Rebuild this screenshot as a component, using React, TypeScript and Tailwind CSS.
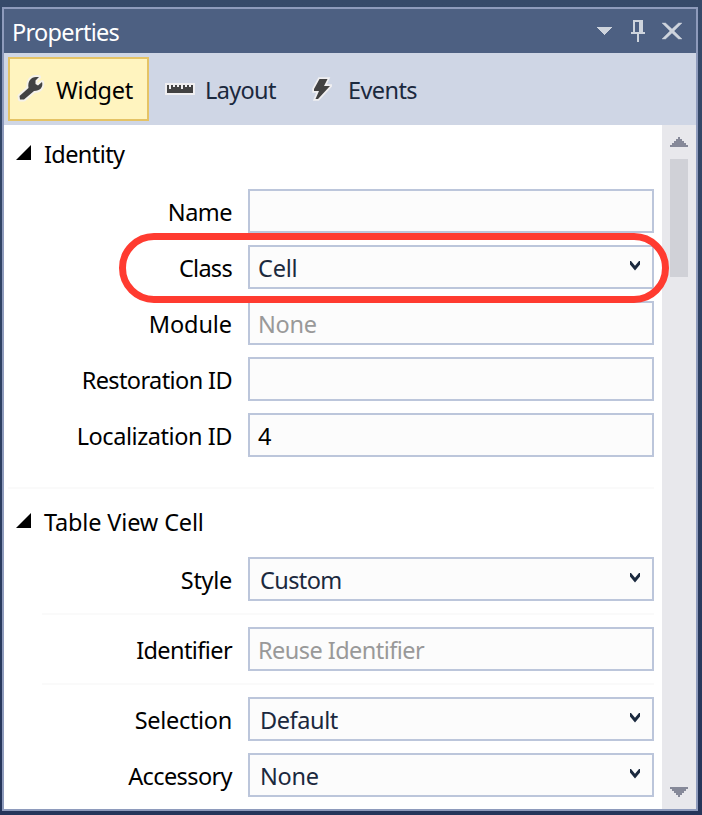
import type { ReactNode } from "react";

function Header({ title, className }: { title: string; className: string }) {
  return (
    <div className={`flex items-center ${className}`}>
      <svg width="15" height="15" viewBox="0 0 15 15" className="mr-[13px] ml-3 -mt-[3px]">
        <path d="M15 0V15H0Z" fill="#000" />
      </svg>
      <span className="text-black">{title}</span>
    </div>
  );
}

function Row({ label, tracking = "tracking-[-0.52px]", children }: { label: string; tracking?: string; children?: ReactNode }) {
  return (
    <div className="flex h-11 items-center">
      <span className={`w-[228px] pt-[2px] text-right whitespace-nowrap text-black ${tracking}`}>{label}</span>
      <div className="ml-4 flex h-11 w-[406px] items-center border-2 border-[#bcc6db] bg-[#fcfcfc] pt-[2px] tracking-[-0.5px] text-[#1b293e]">
        {children}
      </div>
    </div>
  );
}

function Chevron() {
  return (
    <svg width="12" height="10" viewBox="0 0 12 10" className="mr-[11px] mb-1 ml-auto">
      <path d="M1 0V3.6L6 9.4L11 3.6V0H10L6 4.7L2 0Z" fill="#1b293e" />
    </svg>
  );
}

function Divider({ className }: { className: string }) {
  return <div className={`h-[2px] bg-[#fafafa] ${className}`} />;
}

export default function App() {
  return (
    <div className="h-[815px] w-[702px] bg-linear-to-b from-[#364a6a] to-[#25355a] pt-[7px] pl-[2px] font-['Noto_Sans',sans-serif] text-[23.5px] leading-8">
      <div className="relative h-[804px] w-[696px] border-2 border-[#8e9bbc] bg-white">
        <div className="flex h-11 items-center bg-[#4d6082] pl-2 text-white">
          <span className="mt-[2px] tracking-[-0.7px]">Properties</span>
          <svg width="100" height="34" viewBox="0 0 100 34" className="mr-[6px] ml-auto" shapeRendering="crispEdges">
            <path d="M6 13H22L14 21Z" fill="#ced4dd" />
            <path d="M43 6H53V18H55V20H49V28H47V20H41V18H43ZM45 8V18H49V8Z" fill="#ced4dd" fillRule="evenodd" />
            <path d="M72 9H75.500L82 15L88.500 9H92L84 17L92 25H88.500L82 19L75.500 25H72L80 17Z" fill="#ced4dd" stroke="#ced4dd" strokeWidth="0.4" shapeRendering="auto" />
          </svg>
        </div>
        <div className="flex h-[72px] items-center bg-[#cfd6e5] pl-1 text-[#1b293e]">
          <div className="flex h-16 w-[141px] items-center border-2 border-[#e5c365] bg-[#fff4bf] text-black">
            <svg width="30" height="32" viewBox="0 0 30 32" className="ml-[5px] -mt-1">
              <path
                d="M4.500 25L13.500 17C12.500 10 16 6 21 6H24L20.500 9.500V13L23 14.500L27 11C28.500 16 25 20 19 20L9 28.500H5Z"
                fill="#424242"
                stroke="#f5f2ea"
                strokeWidth="4"
                strokeLinejoin="round"
                paintOrder="stroke"
              />
            </svg>
            <span className="mt-[2px] ml-[11px] tracking-[-0.25px]">Widget</span>
          </div>
          <svg width="30" height="12" viewBox="0 0 30 12" className="ml-4" shapeRendering="crispEdges">
            <path d="M0 0H30V12H0Z" fill="#f0eff1" />
            <path d="M2 2H28V10H2Z" fill="#424242" />
            <path d="M4 2h2v4h-2zM8 2h2v2h-2zM12 2h2v2h-2zM16 2h2v4h-2zM20 2h2v2h-2zM24 2h2v2h-2z" fill="#f0eff1" />
          </svg>
          <span className="mt-[2px] ml-[10px] w-[71px] tracking-[-0.65px]">Layout</span>
          <svg width="20" height="24" viewBox="0 0 20 24" className="ml-9">
            <path d="M7.500 2H15.500L12 9H18L6 22H3.500L7 14H2V12Z" fill="#424242" stroke="#f0eff1" strokeWidth="3.5" paintOrder="stroke" />
          </svg>
          <span className="mt-[2px] ml-4 tracking-[-0.6px]">Events</span>
        </div>
        <div className="flex h-[684px]">
          <div className="w-[658px]">
            <Header title="Identity" className="h-16 pb-[6px] tracking-[-0.6px]" />
            <div className="flex flex-col gap-3">
              <Row label="Name" />
              <Row label="Class" tracking="tracking-[-0.7px]"><span className="ml-2 tracking-[-0.2px]">Cell</span><Chevron /></Row>
              <Row label="Module" tracking="tracking-[-0.1px]"><span className="ml-2 text-[#999] tracking-[-0.3px]">None</span></Row>
              <Row label="Restoration ID" tracking="tracking-[-0.6px]" />
              <Row label="Localization ID" tracking="tracking-[-0.44px]"><span className="ml-2 text-black">4</span></Row>
            </div>
            <Divider className="mt-[30px] ml-1 w-[646px]" />
            <Header title="Table View Cell" className="h-[68px] pb-[2px] tracking-[-0.15px]" />
            <Row label="Style" tracking="tracking-[-0.3px]"><span className="ml-[10px] tracking-[-0.6px]">Custom</span><Chevron /></Row>
            <Divider className="my-3 ml-[38px] w-[612px]" />
            <Row label="Identifier" tracking="tracking-[-0.6px]"><span className="ml-2 tracking-[-0.55px] text-[#999]">Reuse Identifier</span></Row>
            <Divider className="my-3 ml-[38px] w-[612px]" />
            <div className="flex flex-col gap-3">
              <Row label="Selection" tracking="tracking-[-0.3px]"><span className="ml-[10px] tracking-[-0.4px]">Default</span><Chevron /></Row>
              <Row label="Accessory" tracking="tracking-[-0.6px]"><span className="ml-[10px] tracking-[-0.3px]">None</span><Chevron /></Row>
            </div>
          </div>
          <div className="flex w-[34px] flex-col items-center bg-[#e8e8ec]">
            <svg width="18" height="10" viewBox="0 0 18 10" className="mt-3" shapeRendering="crispEdges">
              <path d="M8 0h2v2h2v2h2v2h2v2h2v2H0V8h2V6h2V4h2V2h2z" fill="#868999" />
            </svg>
            <div className="mt-3 h-[118px] w-[18px] bg-[#d0d1d7]" />
            <svg width="18" height="10" viewBox="0 0 18 10" className="mt-auto mb-3" shapeRendering="crispEdges">
              <path d="M8 10h2V8h2V6h2V4h2V2h2V0H0v2h2v2h2v2h2v2h2z" fill="#868999" />
            </svg>
          </div>
        </div>
        <div className="absolute top-[224px] left-[115px] h-[70px] w-[550px] rounded-full border-[7px] border-[#ff3b30]" />
      </div>
    </div>
  );
}
